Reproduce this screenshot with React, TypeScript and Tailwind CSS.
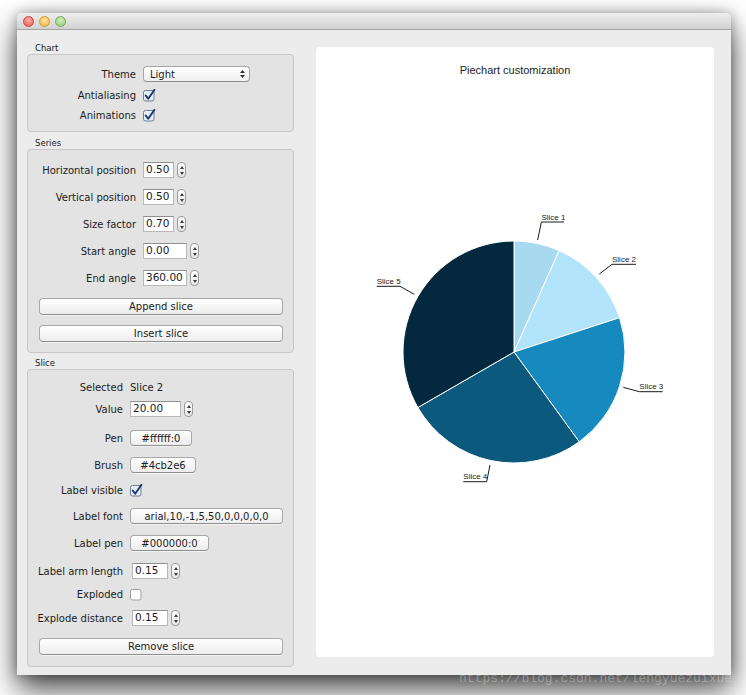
import React from "react";

function Check({ checked = true }: { checked?: boolean }) {
  return (
    <svg width="13" height="13" viewBox="0 0 13 13" className="block">
      <rect x="0.5" y="1.5" width="10.5" height="10.5" rx="2" fill={checked ? "#e6eef8" : "#ffffff"} stroke={checked ? "#6f7f97" : "#9f9f9f"} />
      {checked && (
        <path d="M2.8 6.6 L5.2 9.8 L11.4 0.9" fill="none" stroke="#1d3a6c" strokeWidth="1.9" strokeLinecap="round" strokeLinejoin="round" />
      )}
    </svg>
  );
}

function Stepper() {
  return (
    <div className="w-[9px] h-[16px] rounded-[4px] border border-[#9b9b9b] bg-gradient-to-b from-white to-[#e6e6e6] flex flex-col items-center justify-center gap-[3px]">
      <svg width="4" height="3" viewBox="0 0 4 3" className="block">
        <path d="M0 3 L2 0 L4 3Z" fill="#3a3a3a" />
      </svg>
      <svg width="4" height="3" viewBox="0 0 4 3" className="block">
        <path d="M0 0 L2 3 L4 0Z" fill="#3a3a3a" />
      </svg>
    </div>
  );
}

function Spin({ value, w }: { value: string; w: string }) {
  return (
    <div className="flex items-center gap-[3px]">
      <div className={"h-[16px] bg-white border border-[#b8b8b8] border-t-[#8f8f8f] flex items-center pl-[2px] text-[10.5px] " + w}>{value}</div>
      <Stepper />
    </div>
  );
}

function Btn({ children, w }: { children: React.ReactNode; w: string }) {
  return (
    <div className={"h-[16px] rounded-[4px] border border-[#a8a8a8] border-b-[#8e8e8e] bg-gradient-to-b from-white to-[#ededed] flex items-center justify-center shadow-[0_1px_0_rgba(255,255,255,0.6)] " + w}>
      {children}
    </div>
  );
}

function Row({ label, lw, children, mt }: { label: string; lw: string; children: React.ReactNode; mt: string }) {
  return (
    <div className={"flex items-center h-[20px] gap-[7px] " + mt}>
      <div className={"text-right whitespace-nowrap " + lw}>{label}</div>
      {children}
    </div>
  );
}

const cx = 198;
const cy = 305;
const R = 111;
function pt(a: number): [number, number] {
  const rad = (a * Math.PI) / 180;
  return [cx + R * Math.sin(rad), cy - R * Math.cos(rad)];
}
function slicePath(a0: number, a1: number) {
  const [x0, y0] = pt(a0);
  const [x1, y1] = pt(a1);
  const large = a1 - a0 > 180 ? 1 : 0;
  return `M${cx} ${cy} L${x0} ${y0} A${R} ${R} 0 ${large} 1 ${x1} ${y1} Z`;
}

const slices = [
  { a0: 0, a1: 24, color: "#a7daf1" },
  { a0: 24, a1: 72, color: "#b1e4fb" },
  { a0: 72, a1: 144, color: "#1689bf" },
  { a0: 144, a1: 240, color: "#0b5a7e" },
  { a0: 240, a1: 360, color: "#04283d" },
];

const labels = [
  { arm: "M221.6 193 L225.4 175 L248 175", tx: 225.4, ty: 172.6, text: "Slice 1" },
  { arm: "M283.3 227 L296 217.3 L320 217.3", tx: 296, ty: 214.8, text: "Slice 2" },
  { arm: "M307.3 340.3 L323.3 344.7 L346.7 344.7", tx: 323.3, ty: 342.2, text: "Slice 3" },
  { arm: "M174 418 L170.7 434.7 L147.3 434.7", tx: 147.3, ty: 432.2, text: "Slice 4" },
  { arm: "M98.3 247.3 L84 239.3 L60.7 239.3", tx: 60.7, ty: 236.8, text: "Slice 5" },
];

export default function App() {
  return (
    <div className="relative w-[746px] h-[695px] overflow-hidden bg-white pt-[13px] pl-[17px] font-['DejaVu_Sans',sans-serif] text-[10px] text-[#1c1c1c]">
      <div className="w-[714px] h-[662px] flex flex-col bg-[#ececec] rounded-t-[5px] shadow-[0_14px_30px_rgba(0,0,0,0.72),0_0_12px_rgba(0,0,0,0.3)]">
        {/* title bar */}
        <div className="h-[17px] shrink-0 rounded-t-[5px] bg-gradient-to-b from-[#ededed] to-[#d2d2d2] border-b border-[#a4a4a4] flex items-center pl-[6px] gap-[5px]">
          <div className="w-[11px] h-[11px] rounded-full border border-[#c4473f] bg-[radial-gradient(circle_at_50%_35%,#ffb0a8,#e9544b)]" />
          <div className="w-[11px] h-[11px] rounded-full border border-[#cf9a2c] bg-[radial-gradient(circle_at_50%_35%,#ffe2a0,#f2b43a)]" />
          <div className="w-[11px] h-[11px] rounded-full border border-[#74a85a] bg-[radial-gradient(circle_at_50%_35%,#d2f0c0,#8cc972)]" />
        </div>
        {/* body */}
        <div className="flex flex-1">
          {/* left column */}
          <div className="w-[277px] pl-[10px] flex flex-col">
            {/* Chart */}
            <div className="mt-[12px] h-[12px] leading-[12px] text-[8.5px] pl-[8px]">Chart</div>
            <div className="h-[78px] border border-[#c7c7c7] rounded-[4px] bg-[#e3e3e3] pt-[9px]">
              <Row label="Theme" lw="w-[108px]" mt="">
                <div className="w-[107px] h-[16px] rounded-[4px] border border-[#a6a6a6] border-b-[#8e8e8e] bg-gradient-to-b from-white to-[#efefef] flex items-center justify-between pl-[6px] pr-[4px]">
                  <span>Light</span>
                  <svg width="5" height="8" viewBox="0 0 5 8" className="block">
                    <path d="M0 3 L2.5 0 L5 3Z M0 5 L2.5 8 L5 5Z" fill="#333" />
                  </svg>
                </div>
              </Row>
              <Row label="Antialiasing" lw="w-[108px]" mt="mt-[1px]">
                <Check />
              </Row>
              <Row label="Animations" lw="w-[108px]" mt="">
                <Check />
              </Row>
            </div>

            {/* Series */}
            <div className="mt-[5px] h-[12px] leading-[12px] text-[8.5px] pl-[8px]">Series</div>
            <div className="h-[204px] border border-[#c7c7c7] rounded-[4px] bg-[#e3e3e3] pt-[10px]">
              <Row label="Horizontal position" lw="w-[108px]" mt="">
                <Spin value="0.50" w="w-[31px]" />
              </Row>
              <Row label="Vertical position" lw="w-[108px]" mt="mt-[7px]">
                <Spin value="0.50" w="w-[31px]" />
              </Row>
              <Row label="Size factor" lw="w-[108px]" mt="mt-[7px]">
                <Spin value="0.70" w="w-[31px]" />
              </Row>
              <Row label="Start angle" lw="w-[108px]" mt="mt-[7px]">
                <Spin value="0.00" w="w-[44px]" />
              </Row>
              <Row label="End angle" lw="w-[108px]" mt="mt-[7px]">
                <Spin value="360.00" w="w-[44px]" />
              </Row>
              <div className="mt-[10px] ml-[11px] mr-[10px]">
                <Btn w="w-full h-[17px]">Append slice</Btn>
              </div>
              <div className="mt-[10px] ml-[11px] mr-[10px]">
                <Btn w="w-full h-[17px]">Insert slice</Btn>
              </div>
            </div>

            {/* Slice */}
            <div className="mt-[4px] h-[12px] leading-[12px] text-[8.5px] pl-[8px]">Slice</div>
            <div className="h-[298px] border border-[#c7c7c7] rounded-[4px] bg-[#e3e3e3] pt-[7px]">
              <Row label="Selected" lw="w-[95px]" mt="">
                <span>Slice 2</span>
              </Row>
              <Row label="Value" lw="w-[95px]" mt="mt-[2px]">
                <Spin value="20.00" w="w-[51px]" />
              </Row>
              <Row label="Pen" lw="w-[95px]" mt="mt-[9px]">
                <Btn w="w-[62px]">#ffffff:0</Btn>
              </Row>
              <Row label="Brush" lw="w-[95px]" mt="mt-[7px]">
                <Btn w="w-[66px]">#4cb2e6</Btn>
              </Row>
              <Row label="Label visible" lw="w-[95px]" mt="mt-[5px]">
                <Check />
              </Row>
              <Row label="Label font" lw="w-[95px]" mt="mt-[6px]">
                <Btn w="w-[153px]">arial,10,-1,5,50,0,0,0,0,0</Btn>
              </Row>
              <Row label="Label pen" lw="w-[95px]" mt="mt-[7px]">
                <Btn w="w-[79px]">#000000:0</Btn>
              </Row>
              <Row label="Label arm length" lw="w-[95px]" mt="mt-[8px]">
                <div className="ml-[2px]">
                  <Spin value="0.15" w="w-[36px]" />
                </div>
              </Row>
              <Row label="Exploded" lw="w-[95px]" mt="mt-[3px]">
                <Check checked={false} />
              </Row>
              <Row label="Explode distance" lw="w-[95px]" mt="mt-[4px]">
                <div className="ml-[2px]">
                  <Spin value="0.15" w="w-[36px]" />
                </div>
              </Row>
              <div className="mt-[10px] ml-[11px] mr-[10px]">
                <Btn w="w-full h-[17px]">Remove slice</Btn>
              </div>
            </div>
          </div>

          {/* chart panel */}
          <div className="ml-[22px] mt-[17px] w-[398px] h-[610px] bg-white rounded-[4px] flex flex-col">
            <div className="pt-[16px] h-[30px] leading-[14px] text-center text-[11px] text-[#222] font-['Liberation_Sans',Arial,sans-serif]">
              Piechart customization
            </div>
            <svg width="398" height="580" viewBox="0 30 398 580" className="block">
              {slices.map((s, i) => (
                <path key={i} d={slicePath(s.a0, s.a1)} fill={s.color} stroke="#ffffff" strokeWidth="1" />
              ))}
              {labels.map((l, i) => (
                <g key={i}>
                  <path d={l.arm} fill="none" stroke="#1a1a1a" strokeWidth="1" />
                  <text x={l.tx} y={l.ty} fontSize="8" fontFamily="'Liberation Sans', Arial, sans-serif" fill="#1a1a1a">
                    {l.text}
                  </text>
                </g>
              ))}
            </svg>
          </div>
        </div>
      </div>
      <div className="absolute left-[459px] top-[671px] leading-[15px] text-[13px] font-['Liberation_Mono',monospace] text-white/30 whitespace-nowrap">
        https://blog.csdn.net/lengyuezuixue
      </div>
    </div>
  );
}
